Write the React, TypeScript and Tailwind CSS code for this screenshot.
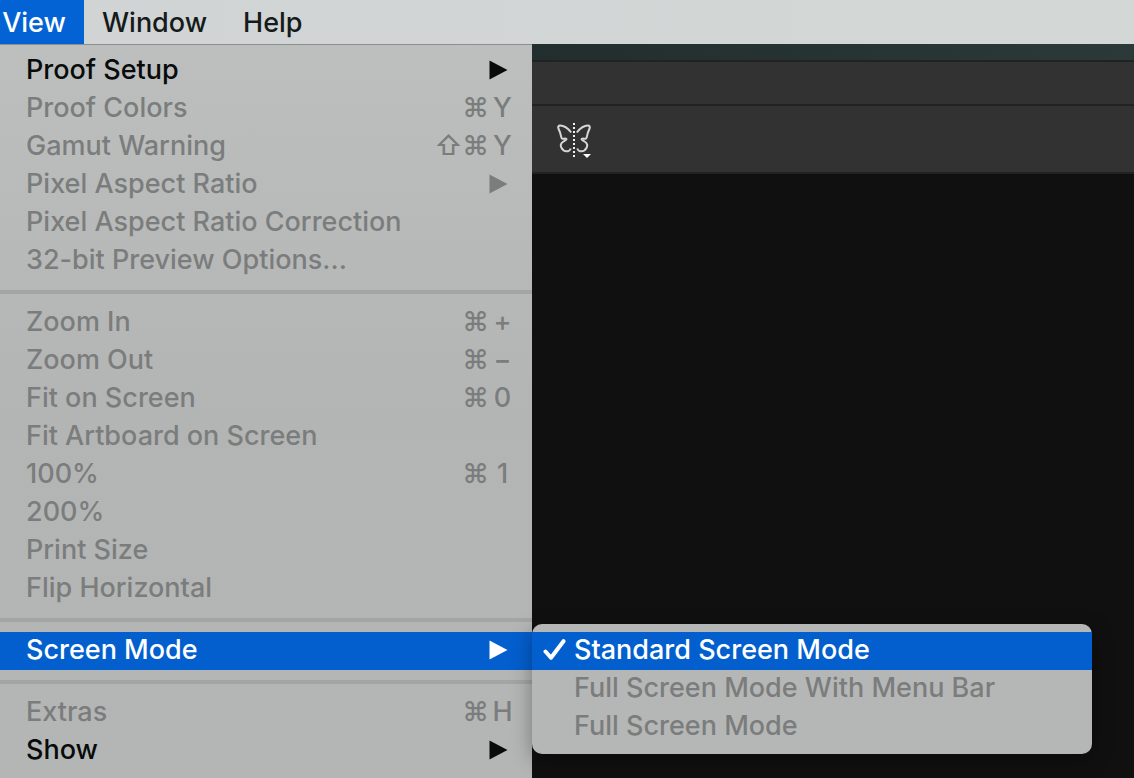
import React from "react";

type Item = {
  label: string;
  keys?: string[];
  enabled?: boolean;
  submenu?: boolean;
};

const groups: Item[][] = [
  [
    { label: "Proof Setup", enabled: true, submenu: true },
    { label: "Proof Colors", keys: ["⌘", "Y"] },
    { label: "Gamut Warning", keys: ["⇧", "⌘", "Y"] },
    { label: "Pixel Aspect Ratio", submenu: true },
    { label: "Pixel Aspect Ratio Correction" },
    { label: "32-bit Preview Options..." },
  ],
  [
    { label: "Zoom In", keys: ["⌘", "+"] },
    { label: "Zoom Out", keys: ["⌘", "−"] },
    { label: "Fit on Screen", keys: ["⌘", "0"] },
    { label: "Fit Artboard on Screen" },
    { label: "100%", keys: ["⌘", "1"] },
    { label: "200%" },
    { label: "Print Size" },
    { label: "Flip Horizontal" },
  ],
  [{ label: "Screen Mode", enabled: true, submenu: true }],
  [
    { label: "Extras", keys: ["⌘", "H"] },
    { label: "Show", enabled: true, submenu: true },
  ],
];

const modes = ["Standard Screen Mode", "Full Screen Mode With Menu Bar", "Full Screen Mode"];

function Arrow() {
  return (
    <svg className="mr-6 h-5 w-[19px]" viewBox="0 0 19 20" aria-hidden="true">
      <path d="M0.5 0.5 18.5 10 0.5 19.5Z" fill="currentColor" />
    </svg>
  );
}

function Check() {
  return (
    <svg className="h-6 w-6" viewBox="0 0 24 24" fill="none" aria-hidden="true">
      <path d="M3.500 13.500 9 19.800 21.500 3.200" stroke="currentColor" strokeWidth="4" strokeLinejoin="round" strokeLinecap="round" />
    </svg>
  );
}

function Butterfly() {
  const wing =
    "M15.200 10.500C12 6.500 7.500 3.600 4.200 3.600C2.300 3.600 1.700 5 2.500 6.800C4.200 10.200 4.800 12.500 5.200 14.800C5.500 16.600 6.500 17 8 16.700C9.500 16.400 10.500 16.700 10.500 17.300C10.500 18 9.500 18.300 7.500 19.500C5 21 4.200 23.500 5.400 25.800C6.800 28.500 9.500 29.700 12 29.200C13.600 28.800 14.200 28 14.800 26.500";
  return (
    <svg className="h-9 w-9" viewBox="0 0 36 36" fill="none" aria-hidden="true">
      <path d={wing} stroke="#d6d6d6" strokeWidth="2" />
      <path d={wing} stroke="#d6d6d6" strokeWidth="2" transform="matrix(-1 0 0 1 36 0)" />
      <path d="M18 1V35" stroke="#f0f0f0" strokeWidth="2" strokeDasharray="2 2" />
      <path d="M27 32H35L31 36Z" fill="#fff" />
    </svg>
  );
}

function Submenu() {
  return (
    <ul
      role="menu"
      aria-label="Screen Mode"
      className="absolute -top-2 left-full z-10 w-[560px] rounded-[10px] bg-[#b5b7b6] py-2 shadow-[0_6px_20px_rgba(0,0,0,0.35)]"
    >
      {modes.map((mode, i) => (
        <li key={mode} role="none">
          <button
            type="button"
            role="menuitemradio"
            aria-checked={i === 0}
            disabled={i !== 0}
            className={
              i === 0
                ? "flex h-[38px] w-full items-center bg-[#035fce] pb-0.5 text-left text-white"
                : "flex h-[38px] w-full items-center pb-0.5 text-left text-[#7b7d7d]"
            }
          >
            <span className="flex w-[42px] shrink-0 justify-end pr-2">{i === 0 && <Check />}</span>
            {mode}
          </button>
        </li>
      ))}
    </ul>
  );
}

function Row({ item }: { item: Item }) {
  const active = item.label === "Screen Mode";
  const tone = active ? "bg-[#035fce] text-white" : item.enabled ? "text-[#080b0a]" : "text-[#7b7d7d]";
  return (
    <li role="none" className="relative">
      <button
        type="button"
        role="menuitem"
        disabled={!item.enabled}
        aria-haspopup={item.submenu ? "menu" : undefined}
        aria-expanded={item.submenu ? active : undefined}
        className={`flex h-[38px] w-full items-center justify-between pb-0.5 pl-[26px] text-left ${tone}`}
      >
        <span>{item.label}</span>
        {item.submenu && <Arrow />}
        {item.keys && (
          <kbd className="flex pr-4 font-[inherit]">
            {item.keys.map((key) => (
              <span key={key} className="flex w-[27px] justify-center">
                {key}
              </span>
            ))}
          </kbd>
        )}
      </button>
      {active && <Submenu />}
    </li>
  );
}

export default function App() {
  return (
    <div className="flex min-h-screen flex-col bg-[#101010] font-['Inter','Liberation_Sans',sans-serif] text-[27px] leading-8 font-medium">
      <nav aria-label="Application menu" className="flex h-11 items-stretch bg-linear-to-r from-[#d1d4d4] to-[#d3d7d6] text-[#151a1a]">
        <button type="button" className="w-[84px] bg-[#0363d5] pr-4 pt-0.5 text-white">View</button>
        <button type="button" className="px-[18px] pt-0.5">Window</button>
        <button type="button" className="px-[18px] pt-0.5">Help</button>
      </nav>
      <div className="flex flex-1">
        <div className="w-[532px] shrink-0 border-t border-[#8c8f8f] bg-linear-to-b from-[#bcbfbe] via-[#b3b5b4] to-[#b4b6b5] pb-2 pt-[7px]">
          {groups.map((group, i) => (
            <React.Fragment key={group[0].label}>
              {i > 0 && <hr className="my-[10px] h-1 border-0 bg-[#a2a5a4]" />}
              <ul role="menu">
                {group.map((item) => (
                  <Row key={item.label} item={item} />
                ))}
              </ul>
            </React.Fragment>
          ))}
        </div>
        <main className="flex min-w-0 flex-1 flex-col">
          <div className="h-4 bg-linear-to-r from-[#222e2e] to-[#2b3938]" />
          <div className="h-[46px] border-y-2 border-[#212222] bg-[#323232]" />
          <div className="flex h-[68px] items-center border-b-2 border-[#212222] bg-[#323232] px-6 pt-0.5">
            <button type="button" aria-label="Paint symmetry">
              <Butterfly />
            </button>
          </div>
        </main>
      </div>
    </div>
  );
}
